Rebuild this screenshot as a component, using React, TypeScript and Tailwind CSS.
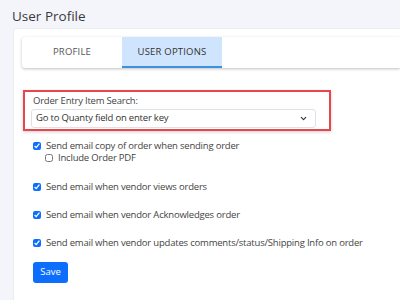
import { ChevronDown } from 'lucide-react';

const options = [
    { label: 'Send email when vendor views orders', mt: 'mt-[17px]' },
    { label: 'Send email when vendor Acknowledges order', mt: 'mt-[16px]' },
    { label: 'Send email when vendor updates comments/status/Shipping Info on order', mt: 'mt-[16px]' },
];

export default function App() {
    return (
        <div className="w-[400px] h-[300px] overflow-hidden bg-[#f4f4fb] font-['Open_Sans',sans-serif] text-[#333]">
            <h1 className="h-[28px] pl-[12px] pt-[6px] text-[13.5px] leading-[20px] text-[#3a3a3a]">User Profile</h1>

            <div className="ml-[13px] h-[272px] bg-white border-l border-t border-[#ececf3] rounded-tl-[3px] pt-[8px] pl-[8px]">
                {/* tabs */}
                <div className="flex h-[31px] bg-white rounded-l-[3px] shadow-[0_1px_3px_rgba(0,0,0,0.25)]">
                    <div className="w-[100px] flex items-center justify-center text-[9.5px] tracking-[0.2px] text-[#555]">
                        PROFILE
                    </div>
                    <div className="w-[100px] flex items-center justify-center bg-[#cfe5fd] border-b-2 border-[#3d8fe0] text-[9.5px] tracking-[0.2px] text-[#333] pt-[2px]">
                        USER OPTIONS
                    </div>
                </div>

                {/* search setting */}
                <div className="mt-[22px] ml-[1px] w-[308px] h-[41px] border-2 border-[#e9454d] shadow-[0_1px_3px_rgba(0,0,0,0.2)] pl-[6px] pr-[13px] pt-[2px]">
                    <div className="text-[9.5px] tracking-[-0.2px] leading-[14px] text-[#444] pl-[2px]">Order Entry Item Search:</div>
                    <div className="mt-[1px] h-[19px] flex items-center justify-between border border-[#dee2e6] rounded-[3px] pl-[4px] pr-[7px]">
                        <span className="text-[9.5px] tracking-[-0.2px] text-[#333]">Go to Quanty field on enter key</span>
                        <ChevronDown className="w-[9px] h-[9px] text-[#333]" strokeWidth={3} />
                    </div>
                </div>

                <div className="pl-[11px]">
                    <label className="mt-[9px] h-[12px] flex items-center gap-[5px] text-[9.5px] tracking-[-0.2px] text-[#444]">
                        <input type="checkbox" defaultChecked className="w-[8px] h-[8px] m-0 accent-[#0d6efd]" />
                        Send email copy of order when sending order
                    </label>
                    <label className="h-[12px] ml-[12px] flex items-center gap-[5px] text-[9.5px] tracking-[-0.2px] text-[#444]">
                        <input type="checkbox" className="w-[8px] h-[8px] m-0 accent-[#0d6efd]" />
                        Include Order PDF
                    </label>

                    {options.map((o) => (
                        <label key={o.label} className={`${o.mt} h-[12px] flex items-center gap-[5px] text-[9.5px] tracking-[-0.2px] text-[#444]`}>
                            <input type="checkbox" defaultChecked className="w-[8px] h-[8px] m-0 accent-[#0d6efd]" />
                            {o.label}
                        </label>
                    ))}

                    <button className="mt-[13px] w-[35px] h-[21px] rounded-[3px] bg-[#0d6efd] text-white text-[9.5px]">
                        Save
                    </button>
                </div>
            </div>
        </div>
    );
}
